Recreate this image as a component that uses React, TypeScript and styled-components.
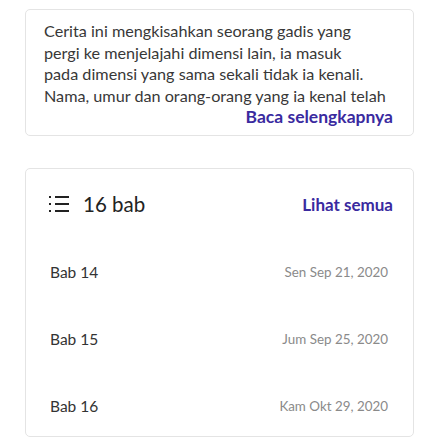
import React from "react";
import styled, { createGlobalStyle } from "styled-components";

const Global = createGlobalStyle`
  html, body { margin: 0; padding: 0; background: #ffffff; }
  body { font-family: "Lato", "Noto Sans", sans-serif; color: #333; }
`;

const Page = styled.div`
  display: flex;
  flex-direction: column;
  gap: 32px;
  padding: 9px 24px 0 25px;
`;

const Card = styled.section`
  border: 1px solid #e4e4e4;
  border-radius: 5px;
  background: #fff;
`;

const SynopsisCard = styled(Card)`
  padding: 10px 20px 7px 18px;
  display: flex;
  flex-direction: column;
`;

const Synopsis = styled.p`
  margin: 0;
  font-size: 16.2px;
  line-height: 21.5px;
  color: #383838;
  white-space: nowrap;
  overflow: hidden;
`;

const Link = styled.a<{ $size?: number }>`
  color: #3a2a9f;
  font-weight: 700;
  font-size: ${(p) => p.$size ?? 17}px;
  text-decoration: none;
  cursor: pointer;
`;

const MoreLink = styled(Link)`
  align-self: flex-end;
  line-height: 22px;
`;

const ChapterCard = styled(Card)`
  padding: 0 20px 10px 23px;
  display: flex;
  flex-direction: column;
`;

const Header = styled.div`
  height: 70px;
  display: flex;
  align-items: center;
  justify-content: space-between;
`;

const Count = styled.div`
  display: flex;
  align-items: center;
  gap: 14px;
  font-size: 20.5px;
  color: #222;
`;

const List = styled.ul`
  list-style: none;
  margin: 13px 0 0;
  padding: 0;
  display: flex;
  flex-direction: column;
  gap: 27px;
`;

const Row = styled.li`
  height: 40px;
  display: flex;
  align-items: center;
  justify-content: space-between;
  padding-left: 1px;
`;

const Title = styled.span`
  font-size: 15.5px;
  color: #333;
`;

const DateText = styled.span`
  font-size: 13.4px;
  color: #8a8a8a;
  padding-right: 5px;
`;

const ListIcon = () => (
  <svg width="20" height="18" viewBox="0 0 20 18" aria-hidden="true">
    <rect x="0" y="1" width="2" height="2" fill="#222" />
    <rect x="0" y="8" width="2" height="2" fill="#222" />
    <rect x="0" y="15" width="2" height="2" fill="#222" />
    <rect x="6" y="1" width="14" height="2" fill="#222" />
    <rect x="6" y="8" width="14" height="2" fill="#222" />
    <rect x="6" y="15" width="14" height="2" fill="#222" />
  </svg>
);

const synopsisLines = [
  "Cerita ini mengkisahkan seorang gadis yang",
  "pergi ke menjelajahi dimensi lain, ia masuk",
  "pada dimensi yang sama sekali tidak ia kenali.",
  "Nama, umur dan orang-orang yang ia kenal telah",
];

const chapters = [
  { title: "Bab 14", date: "Sen Sep 21, 2020" },
  { title: "Bab 15", date: "Jum Sep 25, 2020" },
  { title: "Bab 16", date: "Kam Okt 29, 2020" },
];

export default function App() {
  return (
    <>
      <Global />
      <Page>
        <SynopsisCard>
          <Synopsis>
            {synopsisLines.map((l, i) => (
              <React.Fragment key={i}>
                {l}
                {i < synopsisLines.length - 1 && <br />}
              </React.Fragment>
            ))}
          </Synopsis>
          <MoreLink $size={17.5}>Baca selengkapnya</MoreLink>
        </SynopsisCard>
        <ChapterCard>
          <Header>
            <Count>
              <ListIcon />
              16 bab
            </Count>
            <Link>Lihat semua</Link>
          </Header>
          <List>
            {chapters.map((c) => (
              <Row key={c.title}>
                <Title>{c.title}</Title>
                <DateText>{c.date}</DateText>
              </Row>
            ))}
          </List>
        </ChapterCard>
      </Page>
    </>
  );
}
